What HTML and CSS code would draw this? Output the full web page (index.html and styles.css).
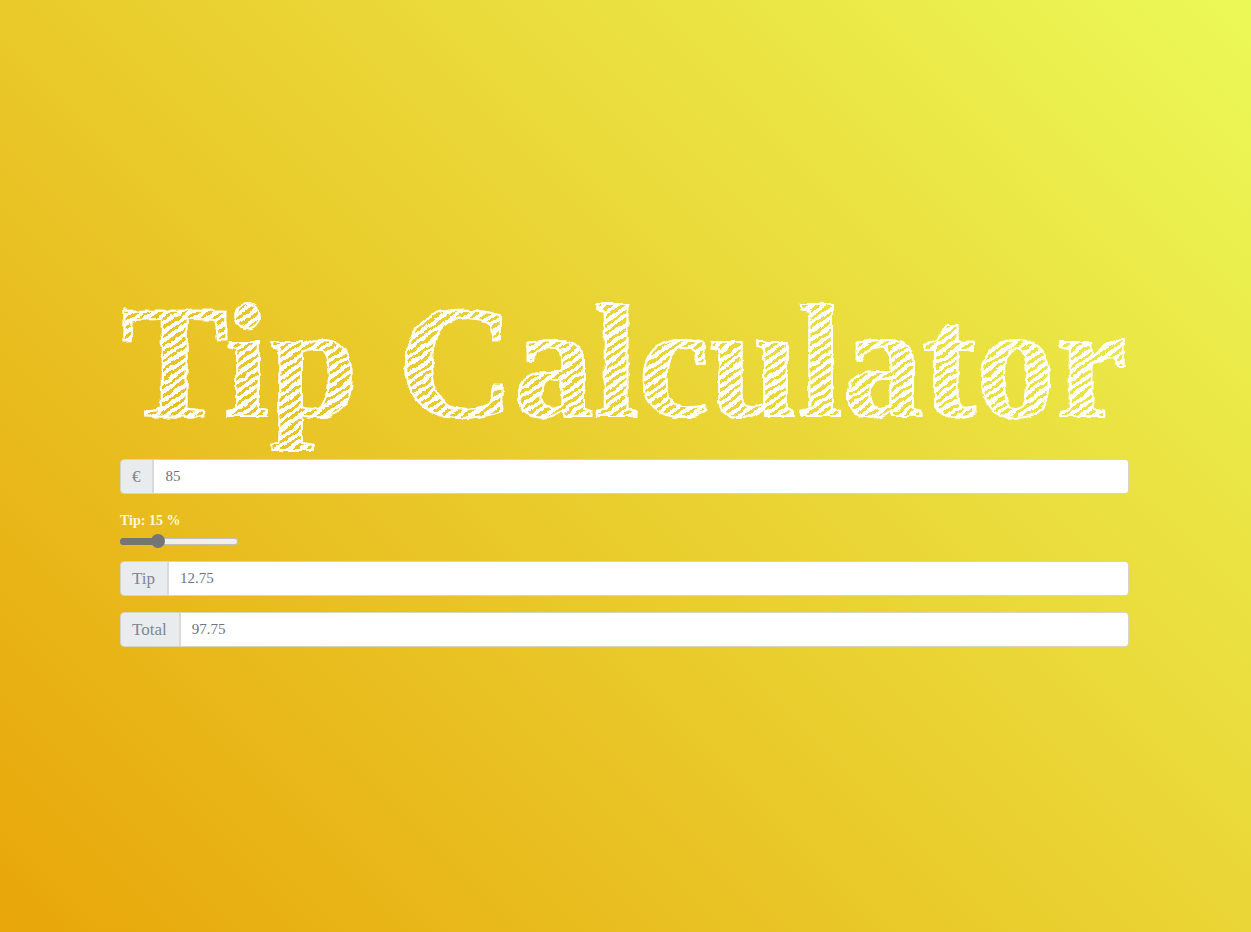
FILE: index.html
```html
<!DOCTYPE html>
<html lang="en">
<head>
<meta charset="utf-8">
<meta name="viewport" content="width=device-width, initial-scale=1">
<title>Tip Calculator</title>
<link rel="stylesheet" href="styles.css">
</head>
<body>
<svg class="filters" width="0" height="0" aria-hidden="true">
  <filter id="rough" x="-2%" y="-5%" width="104%" height="110%">
    <feTurbulence type="fractalNoise" baseFrequency="0.09" numOctaves="2" seed="4" result="noise"/>
    <feDisplacementMap in="SourceGraphic" in2="noise" scale="5" xChannelSelector="R" yChannelSelector="G"/>
  </filter>
</svg>
<main class="calculator">
  <h1 class="title">Tip Calculator</h1>
  <form class="form">
    <div class="group">
      <label class="addon" for="amount">€</label>
      <input class="field" id="amount" type="text" value="85">
    </div>
    <div class="slider">
      <label class="slider-label" for="percent">Tip: 15 %</label>
      <input class="range" id="percent" type="range" min="0" max="50" value="15">
    </div>
    <div class="group">
      <label class="addon" for="tip">Tip</label>
      <input class="field" id="tip" type="text" value="12.75" readonly>
    </div>
    <div class="group">
      <label class="addon" for="total">Total</label>
      <input class="field" id="total" type="text" value="97.75" readonly>
    </div>
  </form>
</main>
</body>
</html>
```

FILE: styles.css
```css
* {
  box-sizing: border-box;
}

body {
  margin: 0;
  min-height: 100vh;
  display: flex;
  align-items: center;
  justify-content: center;
  padding-right: 2px;
  background: linear-gradient(45deg, #e8a609, #ebf957);
  font-family: "Liberation Serif", serif;
}

.filters {
  position: absolute;
}

.calculator {
  max-width: 100%;
  padding-bottom: 2px;
}

.title {
  margin: 0;
  padding: 0 2px 18px 1px;
  font-size: 160px;
  font-weight: 700;
  line-height: 158px;
  color: transparent;
  background: repeating-linear-gradient(145deg, #fff 0 4px, transparent 4px 7px);
  background-clip: text;
  -webkit-background-clip: text;
  -webkit-text-stroke: 2px #fff;
  filter: url(#rough);
}

.form {
  display: flex;
  flex-direction: column;
  gap: 16px;
}

.group {
  display: flex;
  height: 35px;
  border: 1px solid #d3d6c4;
  border-radius: 4px;
  overflow: hidden;
}

.addon {
  display: flex;
  align-items: center;
  padding: 0 12px 0 11px;
  background: #e9ecef;
  border-right: 2px solid #d8dadb;
  font-size: 17px;
  color: #808790;
}

.field {
  flex: 1;
  min-width: 0;
  padding: 0 11px;
  border: 0;
  outline: 0;
  background: #fff;
  font-family: inherit;
  font-size: 15px;
  color: #6c757d;
}

.slider {
  display: flex;
  flex-direction: column;
  align-items: flex-start;
  gap: 6px;
}

.slider-label {
  font-size: 14px;
  font-weight: 700;
  line-height: 22px;
  color: #fff8dc;
}

.range {
  appearance: none;
  width: 118px;
  height: 7px;
  margin: 0;
  background: transparent;
}

.range::-webkit-slider-runnable-track {
  height: 7px;
  border: 0;
  border-radius: 4px;
  background: linear-gradient(90deg, #757575 32%, #efefef 32%);
  box-shadow: inset 0 0 0 1px rgba(117, 117, 117, 0.4);
}

.range::-webkit-slider-thumb {
  appearance: none;
  width: 14px;
  height: 14px;
  margin-top: -4px;
  border-radius: 50%;
  background: #757575;
}
```
